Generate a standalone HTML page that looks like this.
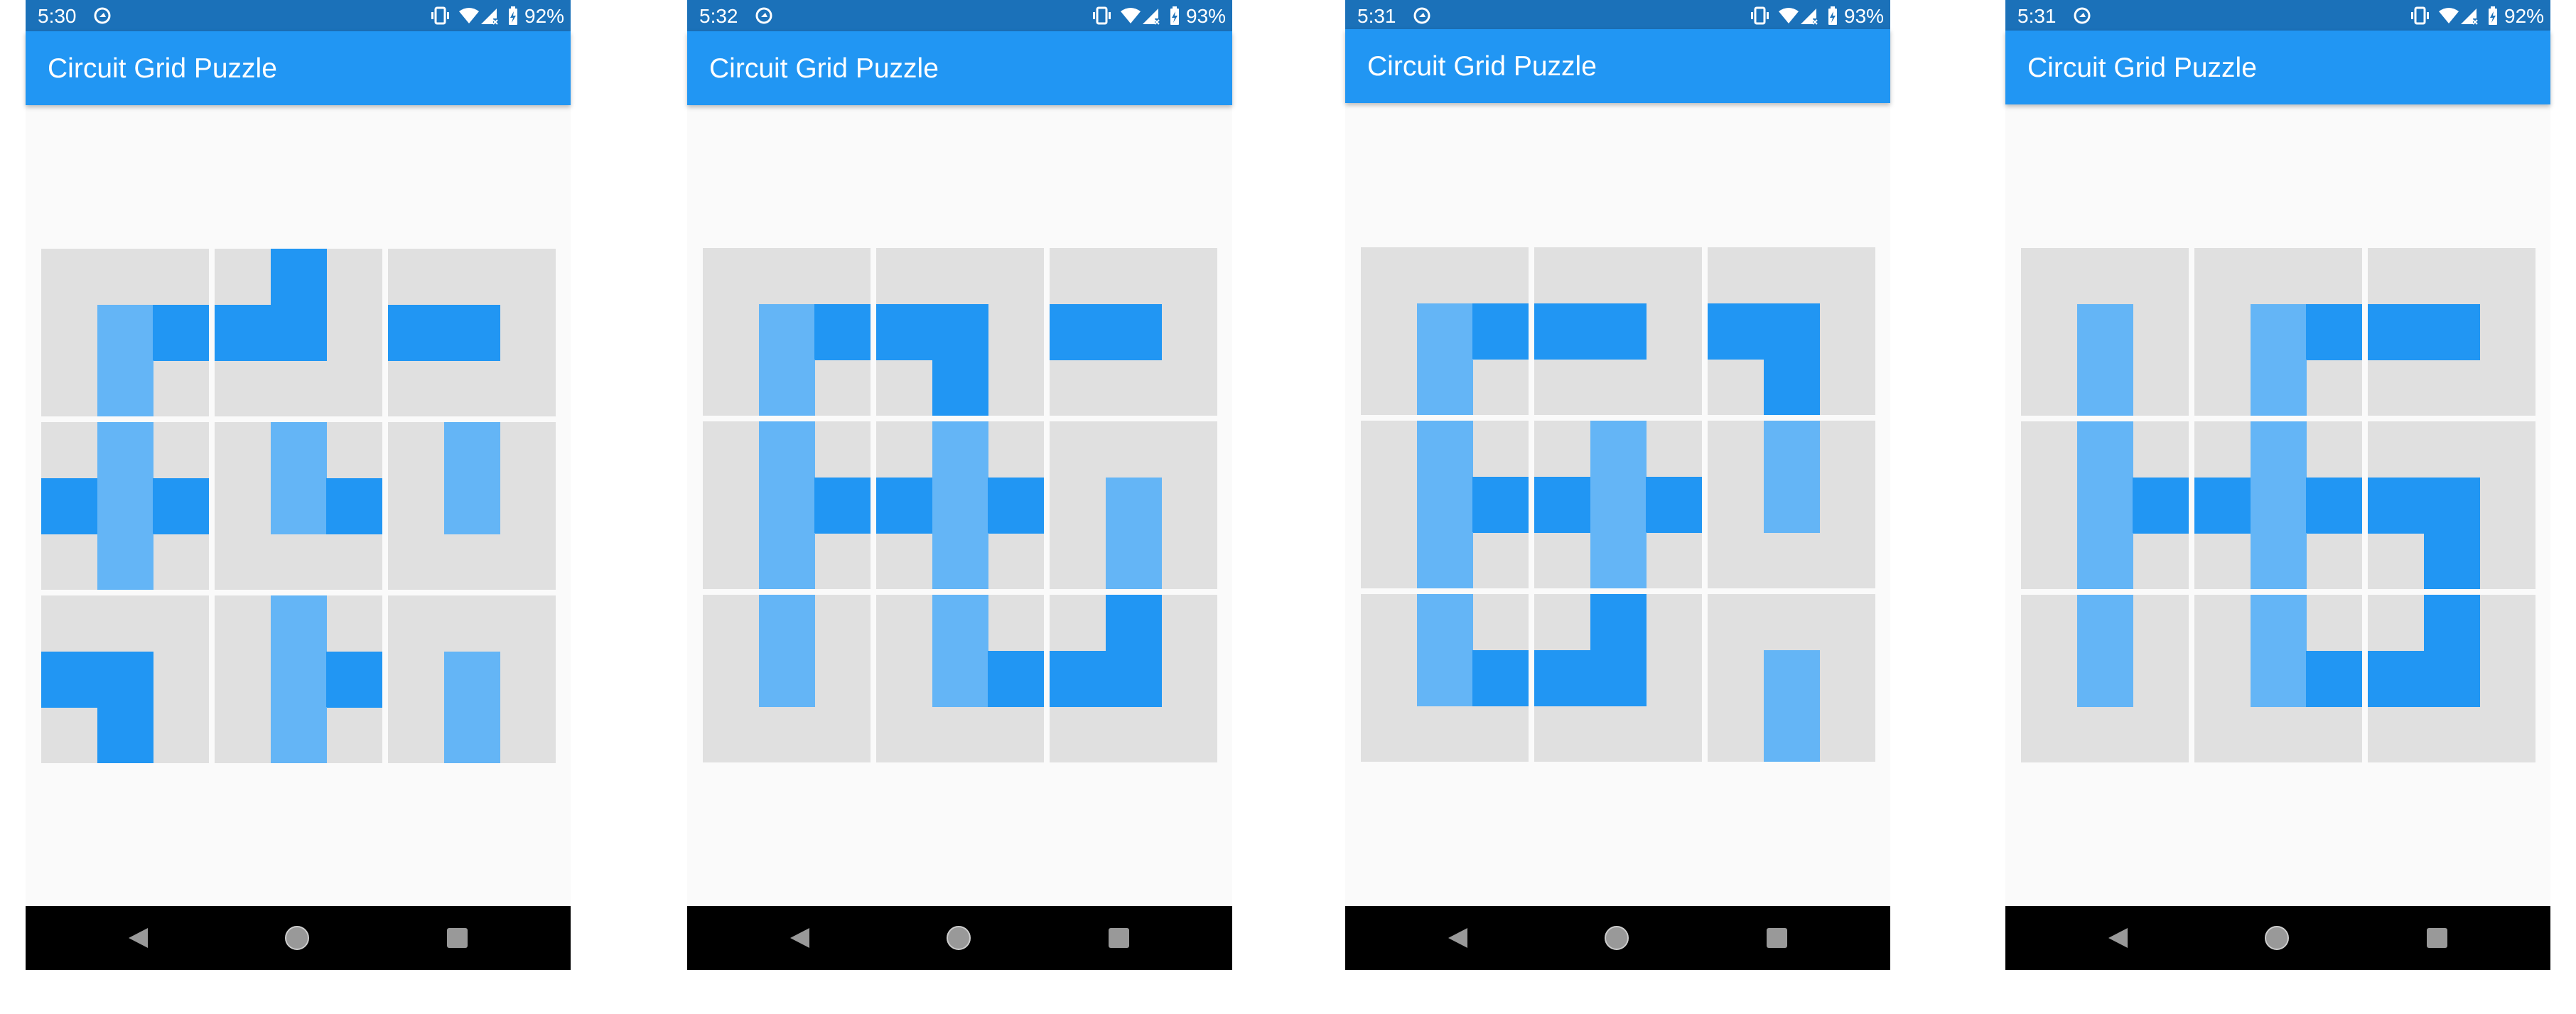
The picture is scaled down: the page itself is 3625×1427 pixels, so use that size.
<!DOCTYPE html>
<html><head><meta charset="utf-8"><style>
*{margin:0;padding:0;box-sizing:border-box}
body{width:3625px;height:1427px;background:#fff;position:relative;overflow:hidden;font-family:"Liberation Sans",sans-serif}
.ph{position:absolute;top:0;width:767px;height:1365px;background:#fafafa}
.sb{position:absolute;left:0;top:0;width:100%;background:#1b71b9;color:#fff}
.sb .t{position:absolute;left:17px;top:7px;font-size:28px}
.sb .r{position:absolute;left:702px;top:7px;font-size:28px}
.ab{position:absolute;left:0;width:100%;height:104px;background:#2196f3;box-shadow:0 3px 6px rgba(0,0,0,.25)}
.ab span{position:absolute;left:31px;top:31px;color:#fff;font-size:39px}
.nb{position:absolute;left:0;top:1275px;width:100%;height:90px;background:#000}
.grid{position:absolute}
.tile{position:absolute;width:236px;height:236px;background:#e0e0e0}
.s{position:absolute;width:79px;height:79px}
.L{background:#64b5f6}.D{background:#2196f3}
</style></head><body>

<div class="ph" style="left:36px" id="p0"></div>
<div class="ph" style="left:967px" id="p1"></div>
<div class="ph" style="left:1893px" id="p2"></div>
<div class="ph" style="left:2822px" id="p3"></div>

<div style="display:none">
<span>5:30</span><span>5:32</span><span>5:31</span><span>Circuit Grid Puzzle</span>
</div>

<script>
var times=["5:30","5:32","5:31","5:31"],bats=["92%","93%","93%","92%"],sbh=[44,44,41,43],gy=[350,349,348,349];
var P=[
["... .LD .L.",".D. DD. ...","... DD. ...",".L. DLD .L.",".L. .LD ...",".L. .L. ...","... DD. .D.",".L. .LD .L.","... .L. .L."],
["... .LD .L.","... DD. .D.","... DD. ...",".L. .LD .L.",".L. DLD .L.","... .L. .L.",".L. .L. ...",".L. .LD ...",".D. DD. ..."],
["... .LD .L.","... DD. ...","... DD. .D.",".L. .LD .L.",".L. DLD .L.",".L. .L. ...",".L. .LD ...",".D. DD. ...","... .L. .L."],
["... .L. .L.","... .LD .L.","... DD. ...",".L. .LD .L.",".L. DLD .L.","... DD. .D.",".L. .L. ...",".L. .LD ...",".D. DD. ..."]];
var icons='<svg width="125" height="32" style="position:absolute;left:570px;top:6px" fill="#fff"><rect x="7" y="5" width="13" height="22" rx="2" fill="none" stroke="#fff" stroke-width="3"/><rect x="1" y="11" width="3" height="10"/><rect x="23" y="11" width="3" height="10"/><path d="M40 10 Q54 0 68 10 L54 27 Z"/><path d="M71 28 L93 6 L93 20 L88 20 L88 28 Z"/><path d="M88 22 L94 28 M94 22 L88 28" stroke="#fff" stroke-width="2"/><rect x="110" y="6" width="12" height="23" rx="1"/><rect x="113" y="3" width="6" height="4"/><path d="M117 10 L112 19 L116 19 L114 26 L120 16 L116 16 Z" fill="#1b71b9"/></svg>';
for(var p=0;p<4;p++){
 var el=document.getElementById("p"+p),h="";
 h+='<div class="sb" style="height:'+sbh[p]+'px"><span class="t">'+times[p]+'</span><svg style="position:absolute;left:95px;top:9px" width="26" height="26"><circle cx="13" cy="13" r="10" fill="none" stroke="#fff" stroke-width="3"/><path d="M9 15 L15 9 L18 15 Z" fill="#fff"/></svg>'+icons+'<span class="r">'+bats[p]+'</span></div>';
 h+='<div class="ab" style="top:'+sbh[p]+'px"><span>Circuit Grid Puzzle</span></div>';
 h+='<div class="grid" style="left:22px;top:'+gy[p]+'px">';
 for(var i=0;i<9;i++){
  var r=Math.floor(i/3),c=i%3;
  h+='<div class="tile" style="left:'+(c*244)+'px;top:'+(r*244)+'px">';
  var rows=P[p][i].split(" ");
  for(var a=0;a<3;a++)for(var b=0;b<3;b++){var ch=rows[a][b];if(ch!=".")h+='<div class="s '+ch+'" style="left:'+Math.round(b*78.7)+'px;top:'+Math.round(a*78.7)+'px"></div>';}
  h+='</div>';
 }
 h+='</div>';
 h+='<div class="nb"><svg width="767" height="90"><path d="M145 45 L172 31 L172 59 Z" fill="#999"/><circle cx="382" cy="45" r="16" fill="#999" stroke="#ccc" stroke-width="2"/><circle cx="382" cy="45" r="13" fill="#999"/><rect x="593" y="31" width="29" height="28" rx="3" fill="#999"/></svg></div>';
 el.innerHTML=h;
}
</script>
</body></html>
